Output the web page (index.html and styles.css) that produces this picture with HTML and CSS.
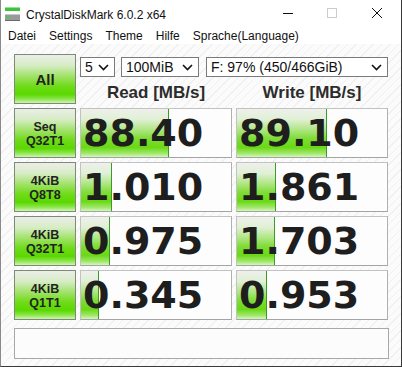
FILE: index.html
```html
<!DOCTYPE html>
<html lang="de">
<head>
  <meta charset="UTF-8" />
  <title>CrystalDiskMark 6.0.2 x64</title>
  <link rel="stylesheet" href="styles.css">
</head>
<body>
  <div class="window">
    <div class="titlebar">
      <svg class="appicon" width="16" height="16" viewBox="0 0 16 16">
        <rect x="0" y="0" width="15" height="4" fill="#3cc43c" />
        <rect x="0" y="0" width="15" height="1" fill="#8ee88e" />
        <rect x="0" y="7" width="15" height="7" fill="#9a9a9a" />
        <rect x="0" y="7" width="15" height="1" fill="#c8c8c8" />
        <rect x="0" y="13" width="15" height="1" fill="#6a6a6a" />
        <rect x="1" y="9" width="3" height="2" fill="#40d040" />
      </svg>
      <span class="title">CrystalDiskMark 6.0.2 x64</span>
      <div class="controls">
        <svg width="46" height="29" viewBox="0 0 46 29"><line x1="20" y1="13.5" x2="30" y2="13.5" stroke="#111" /></svg>
        <svg width="46" height="29" viewBox="0 0 46 29"><rect x="18.5" y="8.5" width="9" height="9" fill="none" stroke="#ccc" /></svg>
        <svg width="46" height="29" viewBox="0 0 46 29"><path d="M17 8 L27 18 M27 8 L17 18" stroke="#111" /></svg>
      </div>
    </div>
    <div class="menubar">
      <span>Datei</span>
      <span>Settings</span>
      <span>Theme</span>
      <span>Hilfe</span>
      <span>Sprache(Language)</span>
    </div>
    <div class="client">
      <div class="grid">
        <div class="btn all">All</div>
        <div class="top">
          <div class="selects">
            <div class="select s-count">5<svg class="chev" width="11" height="7" viewBox="0 0 11 7"><path d="M1 1 L5.5 5.5 L10 1" fill="none" stroke="#111" stroke-width="1.6" /></svg></div>
            <div class="select s-size">100MiB<svg class="chev" width="11" height="7" viewBox="0 0 11 7"><path d="M1 1 L5.5 5.5 L10 1" fill="none" stroke="#111" stroke-width="1.6" /></svg></div>
            <div class="select s-drive">F: 97% (450/466GiB)<svg class="chev" width="11" height="7" viewBox="0 0 11 7"><path d="M1 1 L5.5 5.5 L10 1" fill="none" stroke="#111" stroke-width="1.6" /></svg></div>
          </div>
          <div class="heads">
            <div class="head">Read [MB/s]</div>
            <div class="head">Write [MB/s]</div>
          </div>
        </div>

        <div class="btn label">Seq<br>Q32T1</div>
        <div class="value"><div class="bar" style="width: 87px"></div><span class="num">88.40</span></div>
        <div class="value"><div class="bar" style="width: 89px"></div><span class="num">89.10</span></div>

        <div class="btn label">4KiB<br>Q8T8</div>
        <div class="value"><div class="bar" style="width: 30px"></div><span class="num">1.010</span></div>
        <div class="value"><div class="bar" style="width: 38px"></div><span class="num">1.861</span></div>

        <div class="btn label">4KiB<br>Q32T1</div>
        <div class="value"><div class="bar" style="width: 28px"></div><span class="num">0.975</span></div>
        <div class="value"><div class="bar" style="width: 37px"></div><span class="num">1.703</span></div>

        <div class="btn label">4KiB<br>Q1T1</div>
        <div class="value"><div class="bar" style="width: 17px"></div><span class="num">0.345</span></div>
        <div class="value"><div class="bar" style="width: 29px"></div><span class="num">0.953</span></div>
      </div>
      <div class="status"></div>
    </div>
  </div>
</body>
</html>
```

FILE: styles.css
```css
body { margin: 0; font-family: "Liberation Sans", Arial, sans-serif; }
.window { width: 400px; height: 366px; border-left: 1px solid #8a8a8a; border-right: 1px solid #3a3a3a; border-bottom: 1px solid #3a3a3a; display: flex; flex-direction: column; background: #fff; }
.titlebar { height: 29px; display: flex; align-items: center; font-size: 12px; color: #111; }
.appicon { margin-left: 4px; margin-right: 5px; margin-top: 1px; }
.title { flex: 1; margin-top: 1px; }
.controls { display: flex; }
.controls svg { display: block; }
.menubar { height: 15px; display: flex; gap: 13px; padding-left: 7px; font-size: 12px; color: #111; line-height: 14px; }
.client { flex: 1; padding: 10px 0 0 13px; background: repeating-linear-gradient(135deg, #fbfbfb 0 5px, #f0f0f0 5px 6px); }
.grid { display: grid; grid-template-columns: 62px 152px 152px; gap: 4px; }
.btn { box-sizing: border-box; border: 1px solid #7d8a78; color: #222; font-weight: bold; text-align: center; display: flex; align-items: center; justify-content: center; background: linear-gradient(to bottom, #eceee9 0%, #d6ecc4 22%, #9fe266 45%, #6fdb18 65%, #5bd800 82%, #8ee650 92%, #cff5b2 100%); }
.all { height: 50px; font-size: 15px; }
.label { height: 50px; font-size: 12.5px; line-height: 14px; padding-top: 1px; }
.top { grid-column: 2 / 4; }
.selects { display: flex; margin-top: 3px; height: 20px; }
.select { box-sizing: border-box; height: 20px; border: 1px solid #7a7a7a; background: #fff; font-size: 14px; line-height: 18px; padding-left: 4px; display: flex; align-items: center; justify-content: space-between; color: #111; }
.chev { margin-right: 5px; }
.s-count { width: 35px; }
.s-size { width: 78px; margin-left: 6px; }
.s-drive { width: 182px; margin-left: 7px; }
.heads { display: grid; grid-template-columns: 152px 152px; gap: 4px; margin-top: 5px; }
.head { text-align: center; font-weight: bold; font-size: 17px; line-height: 22px; color: #2c2c2c; }
.value { position: relative; box-sizing: border-box; height: 50px; border: 1px solid #c2c2c2; border-bottom-color: #a4a4a4; border-right-color: #b0b0b0; background: #fdfdfd; overflow: hidden; }
.bar { position: absolute; left: 0; top: 0; bottom: 0; border-right: 1px solid #3c9a2a; background: linear-gradient(to bottom, #eef0ec 0%, #e0f0d4 22%, #ade680 44%, #7ddc34 62%, #6ad914 80%, #9ee668 92%, #d4f6bc 100%); }
.num { position: relative; display: block; padding-left: 2px; font-family: "DejaVu Sans", Verdana, sans-serif; font-weight: bold; font-size: 38px; line-height: 48px; color: #1e1e1e; }
.status { box-sizing: border-box; width: 375px; height: 31px; margin-top: 8px; border: 1px solid #a8a8a8; background: #fcfcfc; }
```
